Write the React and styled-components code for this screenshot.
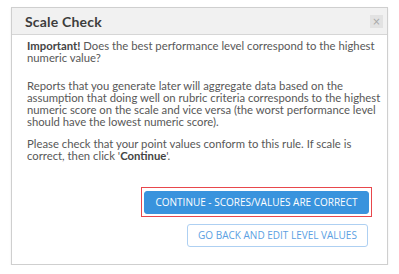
import React from "react";
import styled, { createGlobalStyle } from "styled-components";

const Global = createGlobalStyle`
  html, body {
    margin: 0;
    padding: 0;
    background: #fff;
  }
  body {
    font-family: Lato, "Liberation Sans", sans-serif;
  }
`;

// 모달 전체
const Dialog = styled.div`
  width: 377px;
  margin: 7px 0 0 11px;
  border: 1px solid #cfcfcf;
  box-sizing: border-box;
  background: #fff;
  box-shadow: 0 1px 2px rgba(0, 0, 0, 0.08);
`;

// 헤더
const Header = styled.div`
  height: 26px;
  background: #f1f1f1;
  border-bottom: 1px solid #d6d6d6;
  display: flex;
  align-items: center;
  justify-content: space-between;
  padding: 0 4px 0 13px;
`;

const Title = styled.div`
  font-size: 14px;
  font-weight: 700;
  color: #3d3d3d;
  letter-spacing: 0.2px;
`;

const CloseBtn = styled.button`
  width: 13px;
  height: 13px;
  border: 0;
  padding: 0;
  background: #e2e2e2;
  color: #a8a8a8;
  font-size: 10px;
  line-height: 13px;
  font-family: "DejaVu Sans", sans-serif;
  cursor: pointer;
`;

// 본문
const Body = styled.div`
  padding: 5px 6px 17px 15px;
`;

const Text = styled.p`
  margin: 0 0 ${(p) => p.gap ?? 10}px;
  font-size: 11.3px;
  line-height: 12px;
  color: #585858;

  b {
    color: #444;
  }
`;

const Actions = styled.div`
  display: flex;
  flex-direction: column;
  align-items: flex-end;
  gap: 7px;
  margin-top: 25px;
  padding-right: 13px;
`;

const Focus = styled.div`
  border: 1px solid #e8474c;
  padding: 2px;
  margin-right: -4px;
`;

const Button = styled.button`
  font-family: "Open Sans", Lato, sans-serif;
  font-size: 10px;
  text-transform: uppercase;
  border-radius: 3px;
  height: 23px;
  width: ${(p) => (p.primary ? 225 : 181)}px;
  padding: 0;
  cursor: pointer;
  background: ${(p) => (p.primary ? "#3993dd" : "#fff")};
  color: ${(p) => (p.primary ? "#fff" : "#5b9fe2")};
  border: 1px solid ${(p) => (p.primary ? "#3993dd" : "#aed0f2")};
`;

function App() {
  return (
    <>
      <Global />
      <Dialog>
        <Header>
          <Title>Scale Check</Title>
          <CloseBtn>×</CloseBtn>
        </Header>
        <Body>
          <Text gap={16}>
            <b>Important!</b> Does the best performance level correspond to the
            highest numeric value?
          </Text>
          <Text>
            Reports that you generate later will aggregate data based on the
            assumption that doing well on rubric criteria corresponds to the
            highest numeric score on the scale and vice versa (the worst
            performance level should have the lowest numeric score).
          </Text>
          <Text gap={0}>
            Please check that your point values conform to this rule. If scale is
            correct, then click '<b>Continue</b>'.
          </Text>
          <Actions>
            <Focus>
              <Button primary>Continue - Scores/Values are correct</Button>
            </Focus>
            <Button>Go back and edit level values</Button>
          </Actions>
        </Body>
      </Dialog>
    </>
  );
}

export default App;
